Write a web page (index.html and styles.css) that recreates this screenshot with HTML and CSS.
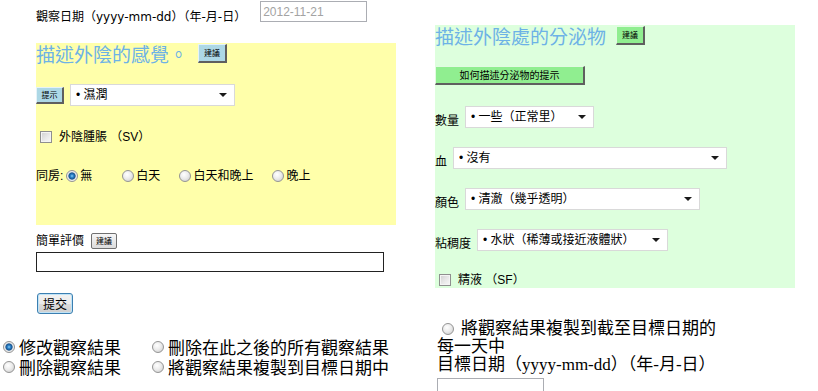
FILE: index.html
```html
<!DOCTYPE html>
<html lang="zh-Hant">
<head>
<meta charset="utf-8">
<title>觀察結果</title>
<link rel="stylesheet" href="styles.css">
</head>
<body>
<div class="page">
  <div class="col-left">
    <div class="date-row">
      <span class="date-label">觀察日期（yyyy-mm-dd）（年-月-日）</span>
      <input class="date-input" type="text" value="2012-11-21">
    </div>

    <section class="panel panel-yellow">
      <div class="panel-head">
        <h2 class="panel-title">描述外陰的感覺。</h2>
        <button class="mini mini-blue title-btn">建議</button>
      </div>
      <div class="hint-row">
        <button class="mini mini-blue hint-btn">提示</button>
        <span class="sel-wrap"><select class="sel w-feel"><option>• 濕潤</option></select></span>
      </div>
      <label class="check-row check-yellow"><input type="checkbox" class="cb">外陰腫脹 （SV）</label>
      <div class="radio-row">
        <span class="radio-label">同房:</span>
        <label class="opt opt-wide"><input type="radio" class="rb" name="sex" checked>無</label>
        <label class="opt"><input type="radio" class="rb" name="sex">白天</label>
        <label class="opt"><input type="radio" class="rb" name="sex">白天和晚上</label>
        <label class="opt"><input type="radio" class="rb" name="sex">晚上</label>
      </div>
    </section>

    <div class="comment-row">
      <span>簡單評價</span>
      <button class="mini-gray">建議</button>
    </div>
    <input class="comment-input" type="text">
    <button class="submit">提交</button>

    <div class="actions">
      <label class="act"><input type="radio" class="rb" name="act" checked>修改觀察結果</label>
      <label class="act"><input type="radio" class="rb" name="act">刪除在此之後的所有觀察結果</label>
      <label class="act"><input type="radio" class="rb" name="act">刪除觀察結果</label>
      <label class="act"><input type="radio" class="rb" name="act">將觀察結果複製到目標日期中</label>
    </div>
  </div>

  <div class="col-right">
    <section class="panel panel-green">
      <div class="panel-head">
        <h2 class="panel-title">描述外陰處的分泌物</h2>
        <button class="mini mini-green title-btn">建議</button>
      </div>
      <button class="tips-btn">如何描述分泌物的提示</button>
      <div class="field field-first">
        <span class="field-label">數量</span>
        <span class="sel-wrap"><select class="sel w-amount"><option>• 一些（正常里）</option></select></span>
      </div>
      <div class="field">
        <span class="field-label">血</span>
        <span class="sel-wrap"><select class="sel w-blood"><option>• 沒有</option></select></span>
      </div>
      <div class="field">
        <span class="field-label">顏色</span>
        <span class="sel-wrap"><select class="sel w-color"><option>• 清澈（幾乎透明）</option></select></span>
      </div>
      <div class="field">
        <span class="field-label">粘稠度</span>
        <span class="sel-wrap"><select class="sel w-visc"><option>• 水狀（稀薄或接近液體狀）</option></select></span>
      </div>
      <label class="check-row check-green"><input type="checkbox" class="cb">精液 （SF）</label>
    </section>

    <div class="copy">
      <label class="copy-opt"><input type="radio" class="rb" name="act">將觀察結果複製到截至目標日期的</label><br>
      每一天中<br>
      目標日期（yyyy-mm-dd）（年-月-日）
      <input class="target-input" type="text">
    </div>
  </div>
</div>
</body>
</html>
```
FILE: styles.css
```css
* { box-sizing: border-box; }
html, body { margin: 0; padding: 0; background: #fff; }
body {
  font-family: "Liberation Sans", "Noto Sans CJK TC", sans-serif;
  font-size: 12px;
  line-height: 14px;
  color: #000;
}
.page {
  display: flex;
  align-items: flex-start;
  width: 818px;
  height: 391px;
  overflow: hidden;
}
.col-left {
  width: 396px;
  flex: none;
  display: flex;
  flex-direction: column;
  align-items: flex-start;
}
.col-right {
  width: 360px;
  flex: none;
  margin-left: 39px;
  padding-top: 25px;
  display: flex;
  flex-direction: column;
  align-items: flex-start;
}

/* date row */
.date-row {
  margin-left: 36px;
  height: 24px;
  display: flex;
  align-items: flex-end;
}
.date-label {
  font-family: "DejaVu Sans", "Noto Sans CJK TC", sans-serif;
  line-height: 14px;
  white-space: nowrap;
}
.date-input {
  align-self: flex-start;
  margin: 1px 0 0 14px;
  width: 107px;
  height: 21px;
  border: 1px solid #abadb3;
  padding: 0 2px;
  font: 12px "Liberation Sans", sans-serif;
  color: #a3a3a3;
  background: #fff;
}

/* panels */
.panel {
  width: 360px;
  display: flex;
  flex-direction: column;
  align-items: flex-start;
}
.panel-yellow {
  margin-left: 36px;
  margin-top: 19px;
  height: 182px;
  background: #ffffaa;
}
.panel-green {
  height: 263px;
  background: #ddffdd;
}
.panel-head {
  height: 21px;
  display: flex;
  align-items: flex-start;
}
.panel-title {
  margin: 0;
  font-family: "Noto Sans CJK TC", sans-serif;
  font-size: 19px;
  line-height: 21px;
  font-weight: normal;
  color: #6db2e6;
  white-space: nowrap;
}

/* small buttons */
.mini {
  font: 8px/1 "Noto Sans CJK TC", sans-serif;
  color: #000;
  padding: 0;
  border-style: solid;
  border-width: 1px 2px 2px 1px;
  border-color: #e6f3f8 #5f5f5f #5f5f5f #e6f3f8;
  display: flex;
  align-items: center;
  justify-content: center;
}
.mini-blue { background: #add8e6; }
.mini-green {
  background: #90ee90;
  border-color: #e2fbe2 #5f5f5f #5f5f5f #e2fbe2;
}
.title-btn {
  width: 29px;
  height: 19px;
  margin: 1px 0 0 10px;
}
.hint-row {
  margin-top: 20px;
  height: 22px;
  display: flex;
  align-items: center;
}
.hint-btn {
  width: 28px;
  height: 17px;
  margin-right: 6px;
}

/* selects */
.sel-wrap {
  position: relative;
  display: block;
}
.sel-wrap::after {
  content: "";
  position: absolute;
  right: 8px;
  top: 50%;
  margin-top: -2px;
  border-left: 4px solid transparent;
  border-right: 4px solid transparent;
  border-top: 4px solid #1a1a1a;
  pointer-events: none;
}
.sel {
  -webkit-appearance: none;
  appearance: none;
  display: block;
  margin: 0;
  height: 22px;
  border: 1px solid #d9d9d9;
  border-radius: 0;
  background: #fff;
  font: 12px "Liberation Sans", "Noto Sans CJK TC", sans-serif;
  color: #000;
  padding: 0 0 0 5px;
}
.w-feel { width: 165px; }
.w-amount { width: 129px; }
.w-blood { width: 274px; }
.w-color { width: 235px; }
.w-visc { width: 191px; }

.field {
  margin-top: 19px;
  height: 22px;
  display: flex;
  align-items: flex-end;
}
.field-first { margin-top: 21px; }
.field-label {
  margin-right: 6px;
  line-height: 14px;
}

/* checkbox rows */
.check-row {
  display: flex;
  align-items: center;
  height: 14px;
  white-space: nowrap;
}
.check-yellow { margin-top: 24px; }
.check-green { margin-top: 22px; }
.cb {
  -webkit-appearance: none;
  appearance: none;
  flex: none;
  width: 12px;
  height: 12px;
  margin: 0 7px 0 4px;
  border: 1px solid #8f8f8f;
  background: linear-gradient(135deg, #cfcfcf 0%, #e9e9e9 55%, #f8f8f8 100%);
  box-shadow: inset 0 0 0 1px #f4f4f4;
}

/* radios */
.rb {
  -webkit-appearance: none;
  appearance: none;
  flex: none;
  width: 12px;
  height: 12px;
  margin: 0;
  border-radius: 50%;
  border: 1px solid #949494;
  background: radial-gradient(circle at 40% 35%, #ffffff 0, #ececec 45%, #c8c8c8 100%);
}
.rb:checked {
  background: radial-gradient(circle at 50% 50%, #8fd0f8 0, #2f86cc 1.5px, #16508c 3.2px, #cfd6dc 3.9px, #f2f2f2 4.6px, #c8c8c8 100%);
}
.radio-row {
  margin-top: 25px;
  height: 14px;
  display: flex;
  align-items: center;
  white-space: nowrap;
}
.radio-label { margin-right: 3px; }
.opt {
  display: flex;
  align-items: center;
  gap: 2px;
  margin-left: 19px;
}
.radio-label + .opt { margin-left: 0; }
.opt-wide { margin-right: 11px; }

/* comment */
.comment-row {
  margin: 8px 0 0 36px;
  height: 16px;
  display: flex;
  align-items: center;
}
.mini-gray {
  width: 26px;
  height: 16px;
  margin-left: 7px;
  padding: 0;
  font: 8px/1 "Noto Sans CJK TC", sans-serif;
  color: #000;
  background: linear-gradient(#f6f6f6, #dcdcdc);
  border: 1px solid #707070;
  border-radius: 2px;
}
.comment-input {
  margin: 3px 0 0 36px;
  width: 348px;
  height: 20px;
  border: 1px solid #222;
  background: #fff;
}
.submit {
  margin: 21px 0 0 37px;
  width: 36px;
  height: 21px;
  padding: 0;
  font: 12px/1 "Noto Sans CJK TC", sans-serif;
  color: #000;
  border: 1px solid #3c7fb1;
  border-radius: 3px;
  background: linear-gradient(#f2f2f2 0%, #ebebeb 50%, #dddddd 51%, #cfcfcf 100%);
  box-shadow: inset 0 0 0 1px #bfe3f7;
}

/* bottom actions */
.actions {
  margin: 23px 0 0 3px;
  display: grid;
  grid-template-columns: 149px auto;
  font: 17px/20px "Noto Sans CJK TC", sans-serif;
  white-space: nowrap;
}
.act {
  display: flex;
  align-items: center;
  gap: 4px;
}

/* right bottom */
.tips-btn {
  margin-top: 20px;
  width: 150px;
  height: 19px;
  padding: 0;
  font: 10px/1 "Noto Sans CJK TC", sans-serif;
  color: #000;
  background: #90ee90;
  border-style: solid;
  border-width: 1px 2px 2px 1px;
  border-color: #e2fbe2 #5f5f5f #5f5f5f #e2fbe2;
}
.copy {
  margin: 32px 0 0 2px;
  font: 17px/18px "Liberation Serif", "Noto Sans CJK TC", serif;
  white-space: nowrap;
}
.copy-opt .rb {
  display: inline-block;
  vertical-align: -1px;
  margin: 0 7px 0 5px;
}
.target-input {
  display: block;
  margin-top: 4px;
  width: 107px;
  height: 21px;
  border: 1px solid #abadb3;
  background: #fff;
}
```
